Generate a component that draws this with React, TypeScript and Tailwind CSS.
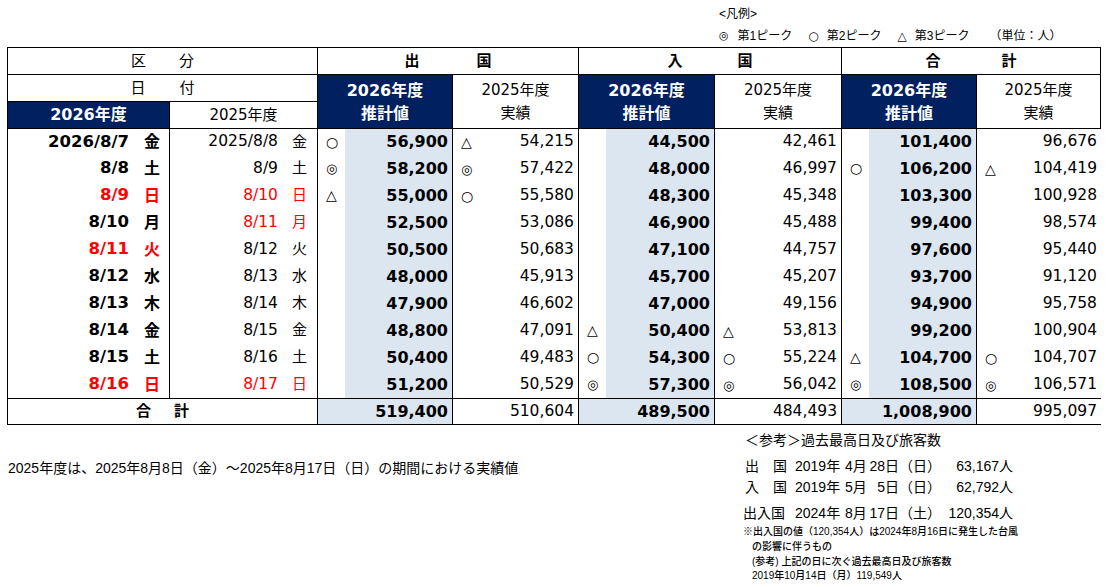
const tableFont = "[font-family:'DejaVu_Sans','Noto_Sans_CJK_JP',sans-serif]";
const jpFont = "[font-family:'Liberation_Sans','Noto_Sans_CJK_JP',sans-serif]";

type Pair = [string, string];
type Row = {
  d26: string;
  w26: string;
  red26: boolean;
  d25: string;
  w25: string;
  red25: boolean;
  cells: Pair[];
};

const rows: Row[] = [
  { d26: "2026/8/7", w26: "金", red26: false, d25: "2025/8/8", w25: "金", red25: false, cells: [["○", "56,900"], ["△", "54,215"], ["", "44,500"], ["", "42,461"], ["", "101,400"], ["", "96,676"]] },
  { d26: "8/8", w26: "土", red26: false, d25: "8/9", w25: "土", red25: false, cells: [["◎", "58,200"], ["◎", "57,422"], ["", "48,000"], ["", "46,997"], ["○", "106,200"], ["△", "104,419"]] },
  { d26: "8/9", w26: "日", red26: true, d25: "8/10", w25: "日", red25: true, cells: [["△", "55,000"], ["○", "55,580"], ["", "48,300"], ["", "45,348"], ["", "103,300"], ["", "100,928"]] },
  { d26: "8/10", w26: "月", red26: false, d25: "8/11", w25: "月", red25: true, cells: [["", "52,500"], ["", "53,086"], ["", "46,900"], ["", "45,488"], ["", "99,400"], ["", "98,574"]] },
  { d26: "8/11", w26: "火", red26: true, d25: "8/12", w25: "火", red25: false, cells: [["", "50,500"], ["", "50,683"], ["", "47,100"], ["", "44,757"], ["", "97,600"], ["", "95,440"]] },
  { d26: "8/12", w26: "水", red26: false, d25: "8/13", w25: "水", red25: false, cells: [["", "48,000"], ["", "45,913"], ["", "45,700"], ["", "45,207"], ["", "93,700"], ["", "91,120"]] },
  { d26: "8/13", w26: "木", red26: false, d25: "8/14", w25: "木", red25: false, cells: [["", "47,900"], ["", "46,602"], ["", "47,000"], ["", "49,156"], ["", "94,900"], ["", "95,758"]] },
  { d26: "8/14", w26: "金", red26: false, d25: "8/15", w25: "金", red25: false, cells: [["", "48,800"], ["", "47,091"], ["△", "50,400"], ["△", "53,813"], ["", "99,200"], ["", "100,904"]] },
  { d26: "8/15", w26: "土", red26: false, d25: "8/16", w25: "土", red25: false, cells: [["", "50,400"], ["", "49,483"], ["○", "54,300"], ["○", "55,224"], ["△", "104,700"], ["○", "104,707"]] },
  { d26: "8/16", w26: "日", red26: true, d25: "8/17", w25: "日", red25: true, cells: [["", "51,200"], ["", "50,529"], ["◎", "57,300"], ["◎", "56,042"], ["◎", "108,500"], ["◎", "106,571"]] },
];

const totals = ["519,400", "510,604", "489,500", "484,493", "1,008,900", "995,097"];

function Sym({ s }: { s: string }) {
  if (!s) return null;
  return <span className={s === "◎" ? "text-[13px]" : "text-[14px]"}>{s}</span>;
}

function Est({ p, first }: { p: Pair; first: boolean }) {
  return (
    <div className={`flex border-l border-black ${first ? "border-t" : ""}`}>
      <div className="flex w-[27px] items-center pl-[8px]">
        <Sym s={p[0]} />
      </div>
      <div className="flex flex-1 items-center justify-end bg-[#dce6f1] pr-[4px] text-[16px] font-bold">{p[1]}</div>
    </div>
  );
}

function Act({ p, first }: { p: Pair; first: boolean }) {
  return (
    <div className={`flex items-center border-l border-black ${first ? "border-t" : ""}`}>
      <div className="w-[27px] pl-[8px]">
        <Sym s={p[0]} />
      </div>
      <div className="flex-1 pr-[4px] text-right text-[15.5px]">{p[1]}</div>
    </div>
  );
}

function Spread({ a, b, gap }: { a: string; b: string; gap: string }) {
  return (
    <div className={`flex h-full items-center justify-center text-[15px] font-bold ${gap}`}>
      <span>{a}</span>
      <span>{b}</span>
    </div>
  );
}

function Record({ label, year, month, day, dow, count, indent }: { label: string; year: string; month: string; day: string; dow: string; count: string; indent?: boolean }) {
  return (
    <div className="flex h-[21px] w-[270px] items-center whitespace-nowrap text-[14px]">
      <span className={`w-[52px] shrink-0 ${indent ? "pl-[2px]" : ""}`}>{label}</span>
      <span className="w-[50px] shrink-0">{year}</span>
      <span className="flex w-[54px] shrink-0 justify-between">
        <span>{month}</span>
        <span>{day}</span>
      </span>
      <span className="shrink-0">{dow}</span>
      <span className="flex-1 text-right">{count}</span>
    </div>
  );
}

export default function App() {
  return (
    <div className="h-[587px] w-[1110px] overflow-hidden bg-white text-black">
      <div className={`h-[47px] pl-[719px] pt-[4px] text-[12px] ${jpFont}`}>
        <div className="h-[20px] leading-[20px]">&lt;凡例&gt;</div>
        <div className="mt-[2px] flex h-[20px] items-center leading-[20px]">
          <span className={`text-[11px] ${tableFont}`}>◎</span>
          <span className="ml-[9px]">第1ピーク</span>
          <span className={`ml-[16px] text-[12px] ${tableFont}`}>○</span>
          <span className="ml-[8px]">第2ピーク</span>
          <span className={`ml-[16px] text-[12px] ${tableFont}`}>△</span>
          <span className="ml-[8px]">第3ピーク</span>
          <span className="ml-[20px]">（単位：人）</span>
        </div>
      </div>

      <div
        className={`ml-[7px] grid w-[1094px] grid-cols-[162px_148px_135px_126px_136px_127px_135px_125px] auto-rows-[27px] ${tableFont}`}
      >
        <div className="col-span-2 flex items-center justify-center gap-[33px] border-l border-t border-black text-[15px]">
          <span>区</span>
          <span>分</span>
        </div>
        <div className="col-span-2 border-l border-t border-black">
          <Spread a="出" b="国" gap="gap-[57px]" />
        </div>
        <div className="col-span-2 border-l border-t border-black">
          <Spread a="入" b="国" gap="gap-[55px]" />
        </div>
        <div className="col-span-2 border-x border-t border-black">
          <Spread a="合" b="計" gap="gap-[61px]" />
        </div>

        <div className="col-span-2 flex items-center justify-center gap-[34px] border-l border-t border-black text-[15px]">
          <span>日</span>
          <span>付</span>
        </div>
        {[0, 1, 2].map((g) => (
          <div key={g} className="contents">
            <div className="row-span-2 flex flex-col items-center justify-center border-l border-t border-black bg-[#002060] text-[16px] font-bold leading-[23px] text-white">
              <span>2026年度</span>
              <span>推計値</span>
            </div>
            <div
              className={`row-span-2 flex flex-col items-center justify-center border-l border-t border-black text-[15px] leading-[23px] ${g === 2 ? "border-r" : ""}`}
            >
              <span>2025年度</span>
              <span>実績</span>
            </div>
          </div>
        ))}
        <div className="flex items-center justify-center border-l border-t border-black bg-[#002060] text-[16px] font-bold text-white">
          2026年度
        </div>
        <div className="flex items-center justify-center border-l border-t border-black text-[15px]">2025年度</div>

        {rows.map((r, i) => {
          const first = i === 0;
          return (
            <div key={i} className="contents">
              <div
                className={`flex items-center justify-end border-l border-black pr-[9px] text-[16.5px] font-bold ${first ? "border-t" : ""} ${r.red26 ? "text-[#ff0000]" : ""}`}
              >
                <span>{r.d26}</span>
                <span className="ml-[15px] text-[16px]">{r.w26}</span>
              </div>
              <div
                className={`flex items-center justify-end border-l border-black pr-[10px] text-[15.5px] ${first ? "border-t" : ""} ${r.red25 ? "text-[#ff0000]" : ""}`}
              >
                <span>{r.d25}</span>
                <span className="ml-[14px] text-[15px]">{r.w25}</span>
              </div>
              {r.cells.map((p, j) =>
                j % 2 === 0 ? <Est key={j} p={p} first={first} /> : <Act key={j} p={p} first={first} />
              )}
            </div>
          );
        })}

        <div className="col-span-2 flex items-center justify-center gap-[23px] border-l border-y border-black text-[15px] font-bold">
          <span>合</span>
          <span>計</span>
        </div>
        {totals.map((t, j) =>
          j % 2 === 0 ? (
            <div key={j} className="flex items-center justify-end border-l border-y border-black bg-[#dce6f1] pr-[4px] text-[16px] font-bold">
              {t}
            </div>
          ) : (
            <div key={j} className="flex items-center justify-end border-l border-y border-black pr-[4px] text-[15.5px]">
              {t}
            </div>
          )
        )}
      </div>

      <div className={`flex ${jpFont}`}>
        <div className="w-[743px] pl-[8px] pt-[33px]">
          <div className="h-[20px] text-[14px] leading-[20px]">
            2025年度は、2025年8月8日（金）～2025年8月17日（日）の期間における実績値
          </div>
        </div>
        <div className="w-[300px]">
          <div className="mt-[5px] h-[20px] pl-[2px] text-[14px] leading-[20px]">＜参考＞過去最高日及び旅客数</div>
          <div className="mt-[6px]">
            <Record label="出　国" year="2019年" month="4月" day="28日" dow="（日）" count="63,167人" indent />
            <Record label="入　国" year="2019年" month="5月" day="5日" dow="（日）" count="62,792人" indent />
          </div>
          <div className="mt-[5px]">
            <Record label="出入国" year="2024年" month="8月" day="17日" dow="（土）" count="120,354人" />
          </div>
          <div className="whitespace-nowrap text-[10px] font-medium">
            <div className="h-[15px] leading-[15px]">※出入国の値（120,354人）は2024年8月16日に発生した台風</div>
            <div className="h-[16px] pl-[9px] leading-[16px]">の影響に伴うもの</div>
            <div className="h-[13px] pl-[9px] leading-[13px]">(参考) 上記の日に次ぐ過去最高日及び旅客数</div>
            <div className="h-[16px] pl-[9px] leading-[16px]">2019年10月14日（月）119,549人</div>
          </div>
        </div>
      </div>
    </div>
  );
}
